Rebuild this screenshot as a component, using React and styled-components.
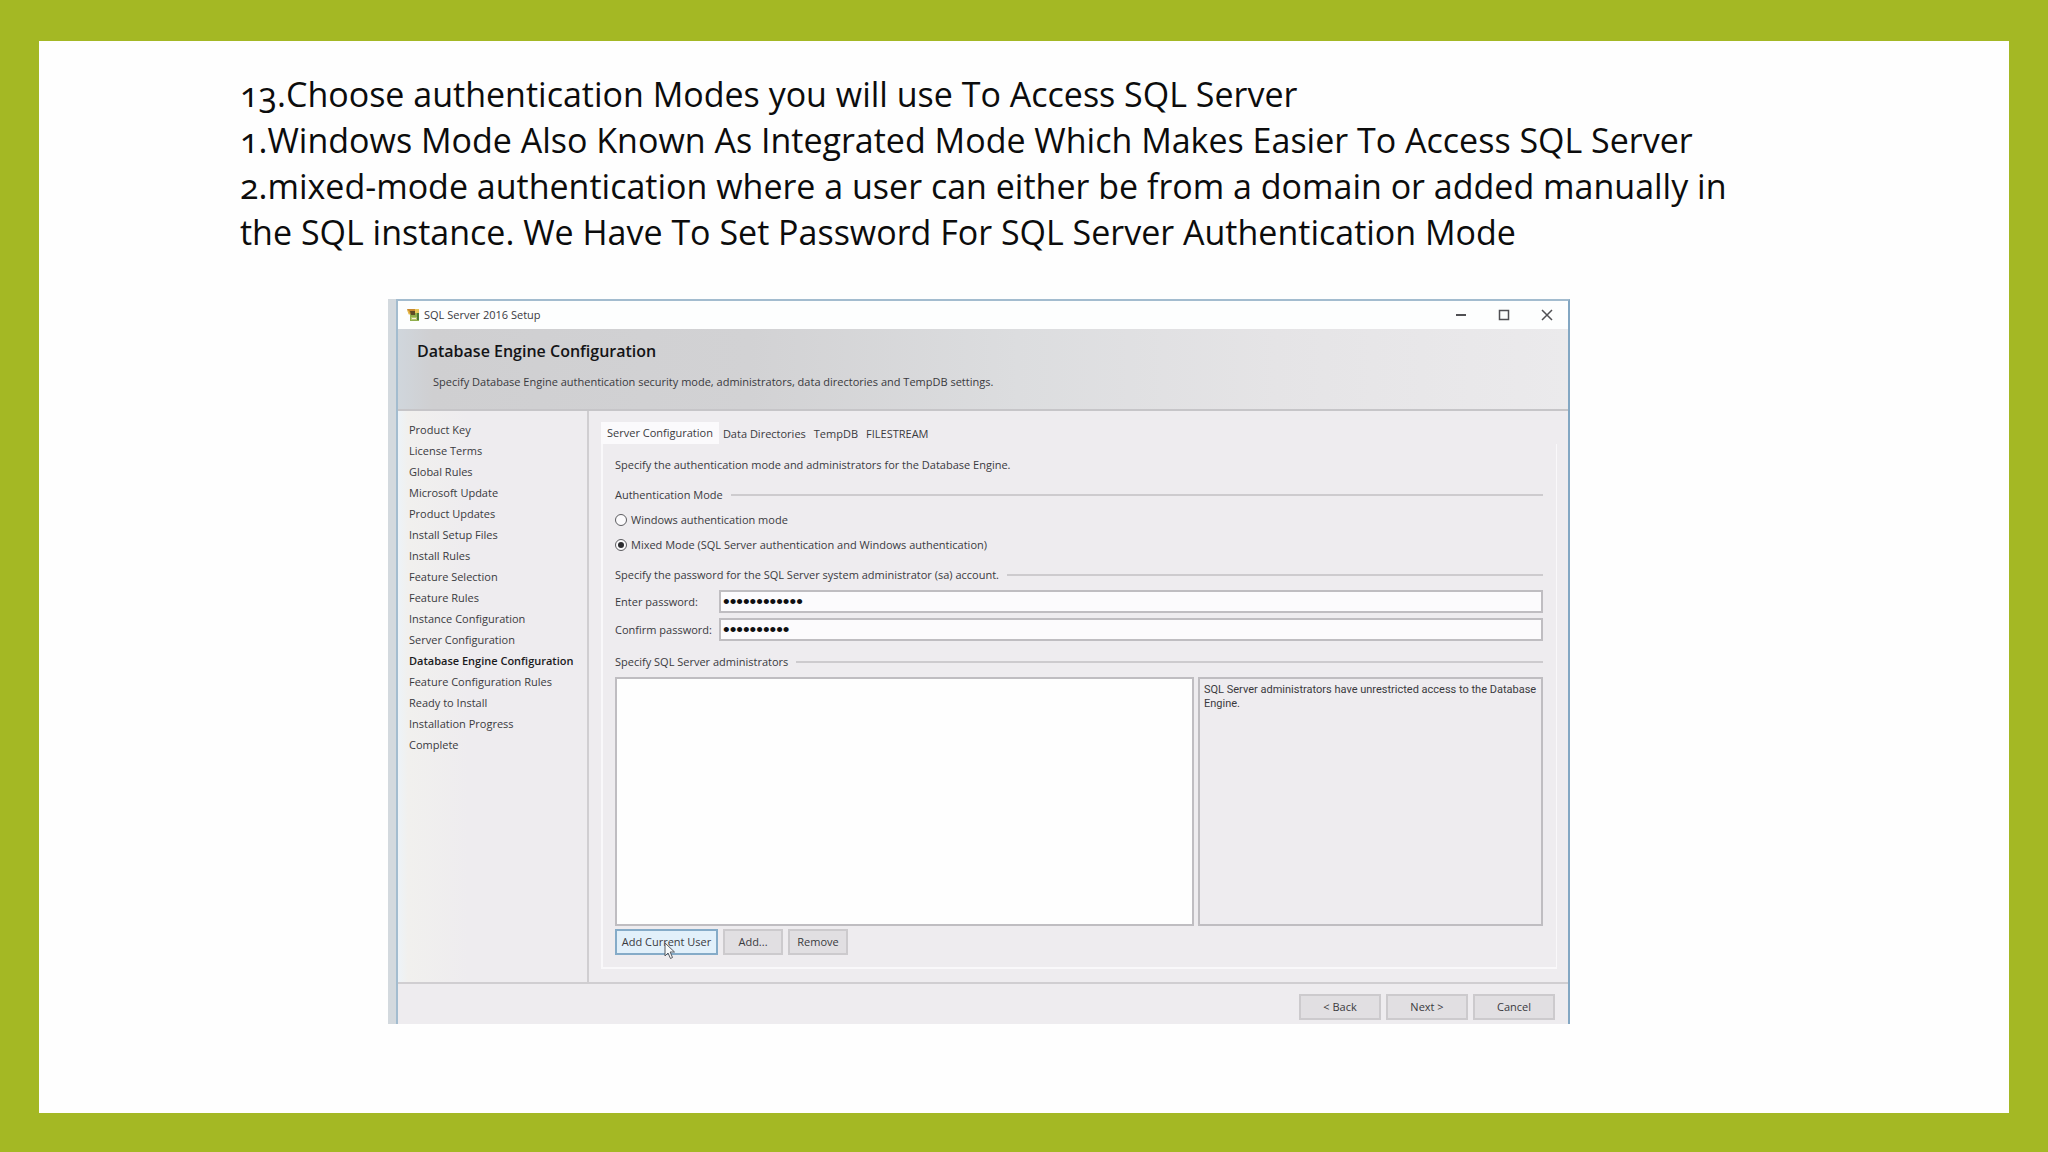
import styled, { createGlobalStyle } from 'styled-components';

const GlobalStyle = createGlobalStyle`
  * {
    box-sizing: border-box;
  }

  body {
    margin: 0;
    background: #a4b824;
  }
`;

const Slide = styled.main`
  min-height: 100vh;
  padding: 30px 0 60px;
  border: 39px solid #a4b824;
  border-top-width: 41px;
  background: #fefefe;
  font-family: "Open Sans", "Noto Sans", sans-serif;
`;

const Notes = styled.div`
  padding: 0 268px 0 201px;
  color: #0c0c0c;
  font-size: 34px;
  line-height: 46px;
  font-variant-numeric: oldstyle-nums;

  p {
    margin: 0;
  }
`;

const Capture = styled.div`
  margin: 44px 439px 0 349px;
  padding-left: 8px;
  background: #d3d9de;
`;

const Window = styled.section`
  border: 2px solid #a3bccf;
  border-right-color: #83a7c3;
  border-bottom: 0;
  background: #eeecef;
  color: #3a3a3e;
  font-size: 11px;
  line-height: 16px;
`;

const TitleBar = styled.header`
  display: flex;
  align-items: center;
  height: 28px;
  padding-left: 8px;
  background: #fdfefe;
`;

const Title = styled.span`
  flex: 1;
  margin-left: 4px;
`;

const WindowButton = styled.button`
  display: flex;
  align-items: center;
  justify-content: center;
  width: 43px;
  height: 28px;
  padding: 0;
  border: 0;
  background: none;
  color: #505054;
`;

const Banner = styled.div`
  padding: 11px 18px 19px 19px;
  border-bottom: 2px solid #c6c5c8;
  background: linear-gradient(90deg, #d0d6dc 0, #cfcfd1 3%, #d2d2d4 30%, #dcdddf 53%, #e5e4e6 75%, #ebeaec 100%);

  h1 {
    margin: 0 0 12px;
    color: #141416;
    font-size: 16px;
    font-weight: 600;
    line-height: 22px;
  }

  p {
    margin: 0 0 0 16px;
  }
`;

const Body = styled.div`
  display: flex;
  border-bottom: 2px solid #d0ced1;
`;

const Steps = styled.ol`
  flex: 0 0 191px;
  margin: 0;
  padding: 8px 0 0 11px;
  border-right: 2px solid #d0ced1;
  background: linear-gradient(90deg, #edf3f8 0, #f1f0ee 10px, #eeecef 70px);
  list-style: none;
`;

const Step = styled.li`
  color: ${(props) => (props.$current ? '#1a1a1c' : '#3a3a3e')};
  font-weight: ${(props) => (props.$current ? 600 : 400)};
  line-height: 21px;
  white-space: nowrap;
`;

const Content = styled.div`
  flex: 1;
  min-width: 0;
  padding: 11px 11px 13px 12px;
`;

const Tabs = styled.div`
  display: flex;
`;

const Tab = styled.button`
  height: 22px;
  padding: ${(props) => (props.$active ? '0 6px' : '2px 4px 0')};
  border: 0;
  background: ${(props) => (props.$active ? '#fbfafc' : 'transparent')};
  color: inherit;
  font: inherit;
`;

const Panel = styled.div`
  padding: 13px 13px 12px 12px;
  border: solid #f9f8fa;
  border-width: 0 1px 2px 2px;
`;

const Intro = styled.p`
  margin: 0;
`;

const GroupTitle = styled.h2`
  display: flex;
  align-items: center;
  gap: 8px;
  margin: ${(props) => props.$top}px 0 0;
  font-size: 11px;
  font-weight: 400;
  line-height: 16px;

  &::after {
    content: "";
    flex: 1;
    height: 2px;
    background: #cdcbce;
  }
`;

const RadioRow = styled.label`
  display: flex;
  align-items: center;
  gap: 4px;
  margin-top: 9px;

  input {
    display: grid;
    place-content: center;
    width: 12px;
    height: 12px;
    margin: 0;
    border: 1px solid #5c5c60;
    border-radius: 50%;
    background: #fbfafc;
    appearance: none;
  }

  input:checked::before {
    content: "";
    width: 6px;
    height: 6px;
    border-radius: 50%;
    background: #2c2c30;
  }
`;

const Fields = styled.div`
  display: grid;
  grid-template-columns: 104px 1fr;
  gap: 5px 0;
  align-items: center;
  margin-top: 7px;
`;

const PasswordInput = styled.input`
  width: 100%;
  height: 23px;
  padding: 0 2px;
  border: 2px solid #bfbdc1;
  background: #fcfbfd;
  color: #101012;
  font-family: "Liberation Sans", sans-serif;
  font-size: 19px;
  line-height: 19px;
`;

const Admins = styled.div`
  display: flex;
  gap: 4px;
  height: 249px;
  margin-top: 7px;
`;

const AdminList = styled.select`
  flex: 1;
  min-width: 0;
  padding: 0;
  border: 2px solid #bfbdc1;
  border-radius: 0;
  background: #fefefe;
  appearance: none;
`;

const Hint = styled.p`
  flex: 0 0 345px;
  margin: 0;
  padding: 4px 2px 4px 4px;
  border: 2px solid #bfbdc1;
  font-family: Roboto, sans-serif;
  line-height: 14px;
`;

const Actions = styled.div`
  display: flex;
  gap: 5px;
  margin-top: 3px;
`;

const Button = styled.button`
  position: relative;
  width: ${(props) => props.$width}px;
  height: 26px;
  padding: 0;
  border: 2px solid ${(props) => (props.$hot ? '#85abc8' : '#cccacd')};
  background: ${(props) => (props.$hot ? '#e2f0fa' : '#e1dfe2')};
  color: inherit;
  font: inherit;
`;

const Pointer = styled.svg`
  position: absolute;
  top: 11px;
  left: 47px;
`;

const Footer = styled.footer`
  display: flex;
  justify-content: flex-end;
  gap: 5px;
  padding: 10px 13px 4px;
`;

const steps = [
  'Product Key',
  'License Terms',
  'Global Rules',
  'Microsoft Update',
  'Product Updates',
  'Install Setup Files',
  'Install Rules',
  'Feature Selection',
  'Feature Rules',
  'Instance Configuration',
  'Server Configuration',
  'Database Engine Configuration',
  'Feature Configuration Rules',
  'Ready to Install',
  'Installation Progress',
  'Complete',
];

const tabs = ['Server Configuration', 'Data Directories', 'TempDB', 'FILESTREAM'];

function SetupIcon() {
  return (
    <svg width="14" height="14" viewBox="0 0 14 14" aria-hidden="true">
      <path d="M4 4h9v9H4z" fill="#8fae4c" />
      <path d="M5 9h7v3H5z" fill="#b7c86c" />
      <path d="M6 10h4v1H6z" fill="#f3f4dc" />
      <path d="M1 1h8v4l-6 1z" fill="#c9892f" />
      <path d="M1 2l2 5 1-1-1-3z" fill="#e6bd4c" />
      <path d="M4 3h5v4H5z" fill="#5e4a25" />
      <path d="M9 1h4v4H9z" fill="#e9c75a" />
      <path d="M11 5h2v7h-2z" fill="#4f7a35" />
    </svg>
  );
}

export default function App() {
  return (
    <>
      <GlobalStyle />
      <Slide>
        <Notes>
          <p>13.Choose authentication Modes you will use To Access SQL Server</p>
          <p>1.Windows Mode Also Known As Integrated Mode Which Makes Easier To Access SQL Server</p>
          <p>
            2.mixed-mode authentication where a user can either be from a domain or added manually in
            {' '}
            the SQL instance. We Have To Set Password For SQL Server Authentication Mode
          </p>
        </Notes>
        <Capture>
          <Window>
            <TitleBar>
              <SetupIcon />
              <Title>SQL Server 2016 Setup</Title>
              <WindowButton type="button" aria-label="Minimize">
                <svg width="12" height="12" viewBox="0 0 12 12">
                  <path d="M1 6h10" stroke="currentColor" strokeWidth="2" />
                </svg>
              </WindowButton>
              <WindowButton type="button" aria-label="Maximize">
                <svg width="12" height="12" viewBox="0 0 12 12" fill="none">
                  <path d="M1.5 1.5h9v9h-9z" stroke="currentColor" strokeWidth="1.5" />
                </svg>
              </WindowButton>
              <WindowButton type="button" aria-label="Close">
                <svg width="12" height="12" viewBox="0 0 12 12">
                  <path d="M1 1l10 10M11 1L1 11" stroke="currentColor" strokeWidth="1.5" />
                </svg>
              </WindowButton>
            </TitleBar>
            <Banner>
              <h1>Database Engine Configuration</h1>
              <p>Specify Database Engine authentication security mode, administrators, data directories and TempDB settings.</p>
            </Banner>
            <Body>
              <Steps>
                {steps.map((step) => (
                  <Step key={step} $current={step === 'Database Engine Configuration'}>{step}</Step>
                ))}
              </Steps>
              <Content>
                <Tabs role="tablist">
                  {tabs.map((tab, i) => (
                    <Tab key={tab} type="button" role="tab" aria-selected={i === 0} $active={i === 0}>
                      {tab}
                    </Tab>
                  ))}
                </Tabs>
                <Panel role="tabpanel">
                  <Intro>Specify the authentication mode and administrators for the Database Engine.</Intro>

                  <GroupTitle $top={14}>Authentication Mode</GroupTitle>
                  <RadioRow>
                    <input type="radio" name="mode" />
                    Windows authentication mode
                  </RadioRow>
                  <RadioRow>
                    <input type="radio" name="mode" defaultChecked />
                    Mixed Mode (SQL Server authentication and Windows authentication)
                  </RadioRow>

                  <GroupTitle $top={14}>Specify the password for the SQL Server system administrator (sa) account.</GroupTitle>
                  <Fields>
                    <label htmlFor="password">Enter password:</label>
                    <PasswordInput id="password" type="password" defaultValue="sqlserver016" />
                    <label htmlFor="confirm">Confirm password:</label>
                    <PasswordInput id="confirm" type="password" defaultValue="sqlserver0" />
                  </Fields>

                  <GroupTitle $top={13} id="admins">Specify SQL Server administrators</GroupTitle>
                  <Admins>
                    <AdminList multiple aria-labelledby="admins" />
                    <Hint>SQL Server administrators have unrestricted access to the Database Engine.</Hint>
                  </Admins>
                  <Actions>
                    <Button type="button" $width={103} $hot>
                      Add Current User
                      <Pointer width="12" height="18" viewBox="0 0 12 18" aria-hidden="true">
                        <path
                          d="M1 1v13l3-3 2.500 5.500 2-1L6.200 10H10.500z"
                          fill="#f6f9fb"
                          stroke="#55585e"
                          strokeLinejoin="round"
                        />
                      </Pointer>
                    </Button>
                    <Button type="button" $width={60}>Add...</Button>
                    <Button type="button" $width={60}>Remove</Button>
                  </Actions>
                </Panel>
              </Content>
            </Body>
            <Footer>
              <Button type="button" $width={82}>&lt; Back</Button>
              <Button type="button" $width={82}>Next &gt;</Button>
              <Button type="button" $width={82}>Cancel</Button>
            </Footer>
          </Window>
        </Capture>
      </Slide>
    </>
  );
}
